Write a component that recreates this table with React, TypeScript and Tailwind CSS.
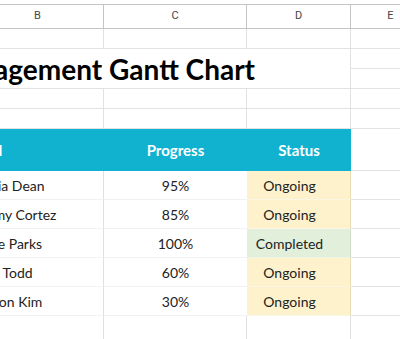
import React from 'react';

type Task = { name: string; progress: string; status: 'Ongoing' | 'Completed' };

const tasks: Task[] = [
  { name: 'Olivia Dean', progress: '95%', status: 'Ongoing' },
  { name: 'Jimmy Cortez', progress: '85%', status: 'Ongoing' },
  { name: 'Katie Parks', progress: '100%', status: 'Completed' },
  { name: 'Tina Todd', progress: '60%', status: 'Ongoing' },
  { name: 'Mason Kim', progress: '30%', status: 'Ongoing' },
];

const font = { fontFamily: 'Lato, "Open Sans", sans-serif' };

const App: React.FC = () => {
  const cell = 'border-r border-b border-[#e2e2e2]';

  return (
    <div className="w-[400px] h-[339px] overflow-hidden bg-white" style={font}>
      <div className="ml-[-28px] pt-[4px] grid grid-cols-[132px_143px_104px_80px]">
        {/* column letters */}
        {['B', 'C', 'D', 'E'].map((l) => (
          <div
            key={l}
            className="h-[25px] flex items-center justify-center border-t border-b border-r border-[#c4c4c4] text-[11px] text-[#444]"
            style={{ fontFamily: 'Roboto, "Liberation Sans", sans-serif' }}
          >
            {l}
          </div>
        ))}

        {/* row 1 */}
        <div className={`h-[20px] ${cell}`} />
        <div className={`h-[20px] ${cell}`} />
        <div className={`h-[20px] ${cell}`} />
        <div className={`h-[20px] ${cell}`} />

        {/* title row (merged) */}
        <div className={`col-span-3 h-[40px] flex items-center justify-end pr-[95px] ${cell}`}>
          <span className="whitespace-nowrap text-[28px] font-bold text-black leading-none">
            Project Management Gantt Chart
          </span>
        </div>
        <div className="flex flex-col">
          <div className={`h-[20px] ${cell}`} />
          <div className={`h-[20px] ${cell}`} />
        </div>

        {/* spacer rows */}
        {[0, 1].map((r) => (
          <React.Fragment key={r}>
            <div className={`h-[20px] ${cell}`} />
            <div className={`h-[20px] ${cell}`} />
            <div className={`h-[20px] ${cell}`} />
            <div className={`h-[20px] ${cell}`} />
          </React.Fragment>
        ))}

        {/* table header */}
        <div className="h-[42px] bg-[#10b2cf] flex items-center text-white font-bold text-[15px]">
          <span className="ml-[-30px]">Assigned</span>
        </div>
        <div className="h-[42px] bg-[#10b2cf] flex items-center justify-center text-white font-bold text-[15px]">
          Progress
        </div>
        <div className="h-[42px] bg-[#10b2cf] flex items-center justify-center text-white font-bold text-[15px]">
          Status
        </div>
        <div className={`h-[42px] ${cell}`} />

        {/* data rows */}
        {tasks.map((t) => (
          <React.Fragment key={t.name}>
            <div className="h-[29px] flex items-center pl-[1px] border-r border-b border-r-[#e0e0e0] border-b-[#f2f2f2] text-[14px] text-[#222]">
              {t.name}
            </div>
            <div className="h-[29px] flex items-center justify-center border-b border-[#f2f2f2] text-[14px] text-[#222]">
              {t.progress}
            </div>
            <div
              className={`h-[29px] flex items-center justify-center pr-[18px] border-r border-b text-[14px] text-[#222] ${
                t.status === 'Completed'
                  ? 'bg-[#e2efda] border-r-[#cfdcc6] border-b-[#eef4ea]'
                  : 'bg-[#fef2cc] border-r-[#e9ddb4] border-b-[#fbf6e4]'
              }`}
            >
              {t.status}
            </div>
            <div className={`h-[29px] ${cell}`} />
          </React.Fragment>
        ))}

        {/* blank rows */}
        <div className="h-[29px] border-r border-[#e0e0e0]" />
        <div className="h-[29px] border-r border-[#e0e0e0]" />
        <div className="h-[29px] border-r border-[#e0e0e0]" />
        <div className="h-[29px] border-r border-[#e2e2e2]" />
      </div>
    </div>
  );
};

export default App;
